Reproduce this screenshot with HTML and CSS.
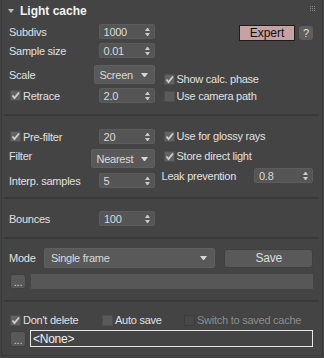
FILE: index.html
```html
<!DOCTYPE html>
<html lang="en">
<head>
  <meta charset="UTF-8" />
  <title>Light cache</title>
  <link rel="stylesheet" href="styles.css">
</head>
<body>

<div class="rollout">
  <div class="rollout-head">
    <span class="twisty"></span>
    <span class="rollout-title">Light cache</span>
    <svg class="grip" width="5" height="5" viewBox="0 0 5 5">
      <rect x="0" y="0" width="1" height="1"/><rect x="2" y="0" width="1" height="1"/><rect x="4" y="0" width="1" height="1"/>
      <rect x="0" y="2" width="1" height="1"/><rect x="2" y="2" width="1" height="1"/><rect x="4" y="2" width="1" height="1"/>
      <rect x="0" y="4" width="1" height="1"/><rect x="2" y="4" width="1" height="1"/><rect x="4" y="4" width="1" height="1"/>
    </svg>
  </div>

  <!-- main settings -->
  <div class="group g1">
    <div class="col-left">
      <div class="row r-a"><span class="lbl">Subdivs</span><span class="spin"><span class="val">1000</span><span class="arr"><i class="up"></i><i class="dn"></i></span></span></div>
      <div class="row r-b"><span class="lbl">Sample size</span><span class="spin"><span class="val">0.01</span><span class="arr"><i class="up"></i><i class="dn"></i></span></span></div>
      <div class="row r-c"><span class="lbl">Scale</span><span class="drop drop-screen"><span class="val">Screen</span><i class="tri"></i></span></div>
      <div class="row r-d">
        <label class="chk"><span class="box on"><svg width="11" height="11" viewBox="0 0 11 11"><path d="M2.5 5.5 L4.5 8 L9 2.5"/></svg></span>Retrace</label>
        <span class="spin"><span class="val">2.0</span><span class="arr"><i class="up"></i><i class="dn"></i></span></span>
      </div>
    </div>
    <div class="col-right">
      <div class="row expert-row"><span class="btn-expert">Expert</span><span class="btn-help">?</span></div>
      <label class="chk chk-calc"><span class="box on"><svg width="11" height="11" viewBox="0 0 11 11"><path d="M2.5 5.5 L4.5 8 L9 2.5"/></svg></span>Show calc. phase</label>
      <label class="chk chk-cam"><span class="box"></span>Use camera path</label>
    </div>
  </div>

  <!-- filtering -->
  <div class="group g2">
    <div class="col-left">
      <div class="row r-a">
        <label class="chk"><span class="box on"><svg width="11" height="11" viewBox="0 0 11 11"><path d="M2.5 5.5 L4.5 8 L9 2.5"/></svg></span>Pre-filter</label>
        <span class="spin"><span class="val">20</span><span class="arr"><i class="up"></i><i class="dn"></i></span></span>
      </div>
      <div class="row r-b"><span class="lbl lbl-filter">Filter</span><span class="drop drop-filter"><span class="val">Nearest</span><i class="tri"></i></span></div>
      <div class="row r-c"><span class="lbl">Interp. samples</span><span class="spin"><span class="val">5</span><span class="arr"><i class="up"></i><i class="dn"></i></span></span></div>
    </div>
    <div class="col-right">
      <label class="chk chk-glossy"><span class="box on"><svg width="11" height="11" viewBox="0 0 11 11"><path d="M2.5 5.5 L4.5 8 L9 2.5"/></svg></span>Use for glossy rays</label>
      <label class="chk chk-store"><span class="box on"><svg width="11" height="11" viewBox="0 0 11 11"><path d="M2.5 5.5 L4.5 8 L9 2.5"/></svg></span>Store direct light</label>
      <div class="row leak-row"><span class="lbl">Leak prevention</span><span class="spin spin-leak"><span class="val">0.8</span><span class="arr"><i class="up"></i><i class="dn"></i></span></span></div>
    </div>
  </div>

  <!-- bounces -->
  <div class="group g3">
    <div class="col-left">
      <div class="row"><span class="lbl">Bounces</span><span class="spin"><span class="val">100</span><span class="arr"><i class="up"></i><i class="dn"></i></span></span></div>
    </div>
  </div>

  <!-- mode -->
  <div class="group g4">
    <div class="mode-row">
      <span class="lbl">Mode</span>
      <span class="drop drop-mode"><span class="val">Single frame</span><i class="tri"></i></span>
      <span class="btn-save">Save</span>
    </div>
    <div class="file-row">
      <span class="btn-dots">...</span>
      <span class="field"></span>
    </div>
  </div>

  <!-- saving -->
  <div class="group g5">
    <div class="opts-row">
      <label class="chk chk-keep"><span class="box on"><svg width="11" height="11" viewBox="0 0 11 11"><path d="M2.5 5.5 L4.5 8 L9 2.5"/></svg></span>Don't delete</label>
      <label class="chk chk-auto"><span class="box"></span>Auto save</label>
      <label class="chk chk-off"><span class="box"></span>Switch to saved cache</label>
    </div>
    <div class="file-row last">
      <span class="btn-dots">...</span>
      <span class="field field-none">&lt;None&gt;</span>
    </div>
  </div>
</div>

</body>
</html>
```

FILE: styles.css
```css
body {
  margin: 0;
  width: 324px;
  height: 358px;
  overflow: hidden;
  background: #444;
  color: #e0e0e0;
  font-family: "Liberation Sans", Arial, sans-serif;
  font-size: 11px;
  letter-spacing: -0.25px;
}
.rollout {
  margin: 0 1px 0 1px;
  height: 356px;
  border-left: 1px solid #3a3a3a;
  border-right: 1px solid #3a3a3a;
  border-bottom: 1px solid #3a3a3a;
  box-sizing: border-box;
}
.rollout-head {
  display: flex;
  align-items: center;
  height: 21px;
  padding: 0 6px 0 6px;
}
.twisty {
  width: 0;
  height: 0;
  border-left: 3px solid transparent;
  border-right: 3px solid transparent;
  border-top: 4px solid #bdbdbd;
  margin: 1px 6px 0 0;
}
.rollout-title {
  font-weight: 700;
  font-size: 12px;
  letter-spacing: 0;
  color: #f2f2f2;
  flex: 1;
}
.grip {
  fill: #8a8a8a;
  margin: -5px 1px 0 0;
}

/* groups */
.group {
  display: flex;
  padding: 0 6px 0 5px;
  margin: 0 3px 0 2px;
  border-bottom: 2px solid #393939;
}
.g1 { height: 93px; }
.g2 { height: 81px; }
.g3 { height: 38px; }
.g4 { height: 61px; flex-direction: column; }
.g5 { height: 52px; flex-direction: column; border-bottom: none; }

.col-left {
  width: 146px;
  display: flex;
  flex-direction: column;
}
.col-right {
  width: 152px;
  margin-left: 7px;
  display: flex;
  flex-direction: column;
}
.row {
  display: flex;
  align-items: center;
  justify-content: space-between;
}

.g1 .r-a { height: 15px; margin-top: 3px; }
.g1 .r-b { height: 15px; margin-top: 4px; }
.g1 .r-c { height: 19px; margin-top: 7px; }
.g1 .r-d { height: 15px; margin-top: 4px; }
.expert-row { height: 16px; margin-top: 4px; justify-content: flex-end; gap: 4px; }
.chk-calc { margin-top: 32px; }
.chk-cam { margin-top: 5px; }

.g2 .r-a { height: 15px; margin-top: 13px; }
.g2 .r-b { height: 19px; margin-top: 5px; }
.g2 .r-c { height: 15px; margin-top: 5px; }
.chk-glossy { margin-top: 14px; }
.chk-store { margin-top: 8px; }
.leak-row { height: 15px; margin-top: 6px; }
.lbl-filter { margin-top: -5px; }

.g3 .row { height: 15px; margin-top: 12px; }

.lbl {
  white-space: nowrap;
}

/* spinner */
.spin {
  width: 56px;
  height: 15px;
  box-sizing: border-box;
  display: flex;
  align-items: center;
  background: #555;
  border: 1px solid #5c5c5c;
  border-radius: 2px;
  color: #dadada;
}
.spin-leak { width: 59px; }
.spin .val {
  flex: 1;
  padding-left: 4px;
}
.arr {
  display: flex;
  flex-direction: column;
  gap: 2px;
  margin-right: 4px;
}
.arr i {
  width: 1px;
  height: 0;
  border-left: 2px solid transparent;
  border-right: 2px solid transparent;
}
.arr .up { border-bottom: 3px solid #c8c8c8; }
.arr .dn { border-top: 3px solid #c8c8c8; }

/* dropdown */
.drop {
  height: 19px;
  box-sizing: border-box;
  display: flex;
  align-items: center;
  background: #595959;
  border: 1px solid #5f5f5f;
  border-radius: 2px;
  color: #dadada;
  padding: 0 6px 0 5px;
}
.drop .val { flex: 1; }
.drop-screen { width: 61px; }
.drop-filter { width: 64px; }
.tri {
  width: 1px;
  height: 0;
  border-left: 3px solid transparent;
  border-right: 3px solid transparent;
  border-top: 4px solid #d8d8d8;
}

/* checkbox */
.chk {
  display: flex;
  align-items: center;
  height: 12px;
  white-space: nowrap;
  margin-left: 1px;
}
.col-right .chk { margin-left: 2px; }
.box {
  width: 11px;
  height: 11px;
  box-sizing: border-box;
  background: #5a5a5a;
  border: 1px solid #4e4e4e;
  margin-right: 2px;
  display: flex;
}
.box.on { background: #626262; }
.box svg { margin: -1px; }
.box path {
  fill: none;
  stroke: #cfcfcf;
  stroke-width: 1.8;
}

/* buttons */
.btn-expert {
  width: 56px;
  height: 16px;
  box-sizing: border-box;
  background: #c6a2a5;
  border: 1px solid #1e1e1e;
  color: #111;
  font-size: 12px;
  letter-spacing: 0;
  display: flex;
  align-items: center;
  justify-content: center;
}
.btn-help {
  width: 14px;
  height: 14px;
  background: #5e5e5e;
  border-radius: 3px;
  color: #e0e0e0;
  display: flex;
  align-items: center;
  justify-content: center;
}

.mode-row {
  display: flex;
  align-items: center;
  height: 20px;
  margin-top: 9px;
}
.mode-row .lbl { width: 35px; }
.drop-mode {
  width: 172px;
  height: 20px;
  padding-left: 6px;
  padding-right: 7px;
}
.btn-save {
  width: 89px;
  height: 19px;
  box-sizing: border-box;
  margin-left: 9px;
  background: #595959;
  border: 1px solid #3f3f3f;
  border-radius: 3px;
  display: flex;
  align-items: center;
  justify-content: center;
  font-size: 12px;
  color: #dcdcdc;
}

.file-row {
  display: flex;
  align-items: center;
  height: 15px;
  margin-top: 6px;
}
.btn-dots {
  width: 16px;
  height: 15px;
  box-sizing: border-box;
  margin-left: 1px;
  background: #595959;
  border: 1px solid #404040;
  border-radius: 3px;
  color: #cfcfcf;
  display: flex;
  align-items: flex-end;
  justify-content: center;
  line-height: 11px;
}
.field {
  flex: 1;
  height: 15px;
  margin-left: 5px;
  background: #575757;
}

.opts-row {
  display: flex;
  align-items: center;
  height: 12px;
  margin-top: 12px;
}
.chk-keep { width: 92px; }
.chk-auto { width: 82px; margin-left: 0; }
.chk-off { margin-left: 0; color: #8c8c8c; }
.chk-off .box { background: #474747; border-color: #3c3c3c; }

.file-row.last {
  height: 17px;
  margin-top: 4px;
}
.file-row.last .btn-dots { height: 16px; }
.field-none {
  height: 17px;
  box-sizing: border-box;
  margin-left: 4px;
  background: #444;
  border: 1px solid #e6e6e6;
  color: #f0f0f0;
  padding-left: 2px;
  display: flex;
  align-items: center;
  font-size: 12px;
}
```
